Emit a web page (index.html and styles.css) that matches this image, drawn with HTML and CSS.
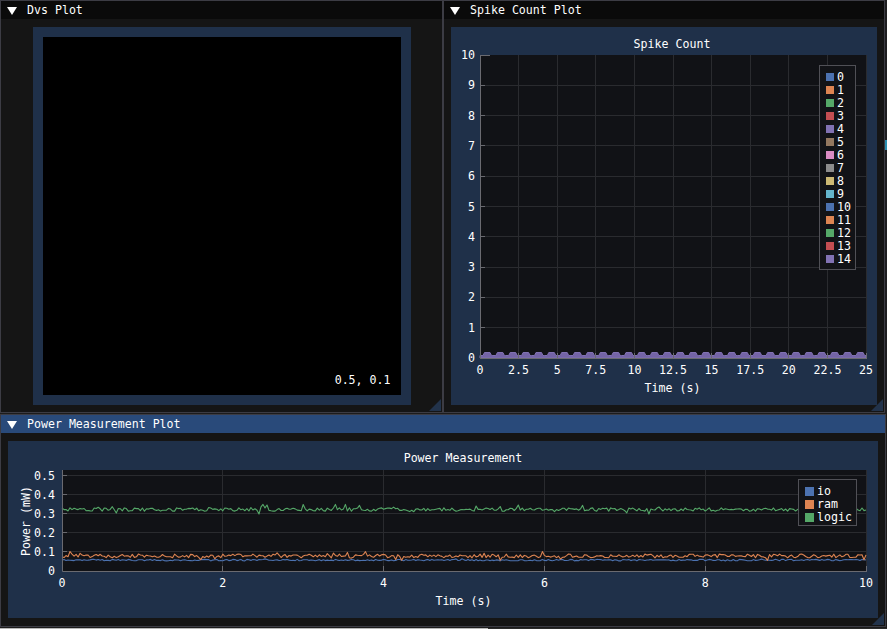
FILE: index.html
```html
<!DOCTYPE html>
<html>
<head>
<meta charset="utf-8">
<title>Plots</title>
<link rel="stylesheet" href="styles.css">
</head>
<body>
<div class="desktop">
  <div class="top-row">
    <section class="win win-dvs">
      <header class="titlebar"><span class="arrow"></span><span class="title">Dvs Plot</span></header>
      <div class="win-body">
        <div class="dvs-frame">
          <div class="dvs-image"><span class="coord">0.5, 0.1</span></div>
        </div>
      </div>
      <div class="grip"></div>
    </section>

    <section class="win win-spike">
      <header class="titlebar"><span class="arrow"></span><span class="title">Spike Count Plot</span></header>
      <div class="win-body">
        <div class="plot-frame">
          <svg class="plot" width="426" height="378" viewBox="0 0 426 378">
            <text x="221" y="21" text-anchor="middle">Spike Count</text>
            <rect class="pbg" x="29" y="28" width="386" height="303"/>
            <path class="grid" d="M67.5 28V331M106.5 28V331M144.5 28V331M183.5 28V331M222.5 28V331M260.5 28V331M299.5 28V331M337.5 28V331M376.5 28V331M415.5 28V331M29 300.5H415M29 270.5H415M29 240.5H415M29 209.5H415M29 179.5H415M29 149.5H415M29 118.5H415M29 88.5H415M29 58.5H415"/>
            <path id="spikeFill" class="spikefill" d=""/>
            <path class="axis" d="M29.5 28V331.5H416"/>
            <path class="ticks" d="M29 28.5h10M29 58.5h5M29 88.5h5M29 118.5h5M29 149.5h5M29 179.5h5M29 209.5h5M29 240.5h5M29 270.5h5M29 300.5h5M67.5 331v-5M106.5 331v-5M144.5 331v-5M183.5 331v-5M222.5 331v-5M260.5 331v-5M299.5 331v-5M337.5 331v-5M376.5 331v-5M415.5 331v-5"/>
            <g text-anchor="end">
              <text x="24" y="32">10</text>
              <text x="24" y="62">9</text>
              <text x="24" y="93">8</text>
              <text x="24" y="123">7</text>
              <text x="24" y="153">6</text>
              <text x="24" y="184">5</text>
              <text x="24" y="214">4</text>
              <text x="24" y="244">3</text>
              <text x="24" y="274">2</text>
              <text x="24" y="305">1</text>
              <text x="24" y="335">0</text>
            </g>
            <g text-anchor="middle">
              <text x="29" y="347">0</text>
              <text x="67.6" y="347">2.5</text>
              <text x="106.2" y="347">5</text>
              <text x="144.8" y="347">7.5</text>
              <text x="183.4" y="347">10</text>
              <text x="222" y="347">12.5</text>
              <text x="260.6" y="347">15</text>
              <text x="299.2" y="347">17.5</text>
              <text x="337.8" y="347">20</text>
              <text x="376.4" y="347">22.5</text>
              <text x="415" y="347">25</text>
              <text x="221.5" y="365">Time (s)</text>
            </g>
            <rect class="legend" x="368.5" y="38.5" width="36" height="204"/>
            <g>
              <rect x="375" y="46" width="8" height="8" fill="#4C72B0"/><text x="386" y="54">0</text>
              <rect x="375" y="59" width="8" height="8" fill="#DD8452"/><text x="386" y="67">1</text>
              <rect x="375" y="72" width="8" height="8" fill="#55A868"/><text x="386" y="80">2</text>
              <rect x="375" y="85" width="8" height="8" fill="#C44E52"/><text x="386" y="93">3</text>
              <rect x="375" y="98" width="8" height="8" fill="#8172B3"/><text x="386" y="106">4</text>
              <rect x="375" y="111" width="8" height="8" fill="#937860"/><text x="386" y="119">5</text>
              <rect x="375" y="124" width="8" height="8" fill="#DA8BC3"/><text x="386" y="132">6</text>
              <rect x="375" y="137" width="8" height="8" fill="#8C8C8C"/><text x="386" y="145">7</text>
              <rect x="375" y="150" width="8" height="8" fill="#CCB974"/><text x="386" y="158">8</text>
              <rect x="375" y="163" width="8" height="8" fill="#64B5CD"/><text x="386" y="171">9</text>
              <rect x="375" y="176" width="8" height="8" fill="#4C72B0"/><text x="386" y="184">10</text>
              <rect x="375" y="189" width="8" height="8" fill="#DD8452"/><text x="386" y="197">11</text>
              <rect x="375" y="202" width="8" height="8" fill="#55A868"/><text x="386" y="210">12</text>
              <rect x="375" y="215" width="8" height="8" fill="#C44E52"/><text x="386" y="223">13</text>
              <rect x="375" y="228" width="8" height="8" fill="#8172B3"/><text x="386" y="236">14</text>
            </g>
          </svg>
        </div>
      </div>
      <div class="grip"></div>
    </section>
    <div class="right-filler"><span class="teal-mark"></span></div>
  </div>

  <section class="win win-power">
    <header class="titlebar active"><span class="arrow"></span><span class="title">Power Measurement Plot</span></header>
    <div class="win-body">
      <div class="plot-frame">
        <svg class="plot" width="870" height="177" viewBox="0 0 870 177">
          <text x="455" y="21" text-anchor="middle">Power Measurement</text>
          <rect class="pbg" x="54" y="29" width="804" height="101"/>
          <path class="grid" d="M214.5 29V130M375.5 29V130M536.5 29V130M697.5 29V130M858.5 29V130M54 110.5H858M54 91.5H858M54 72.5H858M54 53.5H858M54 34.5H858"/>
          <polyline id="io" class="line" stroke="#4C72B0" points=""/>
          <polyline id="ram" class="line" stroke="#DD8452" points=""/>
          <polyline id="logic" class="line" stroke="#55A868" points=""/>
          <path class="axis" d="M54.5 29V130.5H859"/>
          <path class="ticks" d="M54 34.5h5M54 53.5h5M54 72.5h5M54 91.5h5M54 110.5h5M214.5 130v-5M375.5 130v-5M536.5 130v-5M697.5 130v-5M858.5 130v-5"/>
          <g text-anchor="end">
            <text x="47" y="39">0.5</text>
            <text x="47" y="58">0.4</text>
            <text x="47" y="77">0.3</text>
            <text x="47" y="96">0.2</text>
            <text x="47" y="115">0.1</text>
            <text x="47" y="134">0</text>
          </g>
          <g text-anchor="middle">
            <text x="54" y="146">0</text>
            <text x="214.8" y="146">2</text>
            <text x="375.6" y="146">4</text>
            <text x="536.4" y="146">6</text>
            <text x="697.2" y="146">8</text>
            <text x="858" y="146">10</text>
            <text x="455.5" y="164">Time (s)</text>
            <text transform="translate(22 80) rotate(-90)">Power (mW)</text>
          </g>
          <rect class="legend" x="790.5" y="38.5" width="58" height="46"/>
          <rect x="797" y="46" width="9" height="9" fill="#4C72B0"/><text x="809" y="54">io</text>
          <rect x="797" y="59" width="9" height="9" fill="#DD8452"/><text x="809" y="67">ram</text>
          <rect x="797" y="72" width="9" height="9" fill="#55A868"/><text x="809" y="80">logic</text>
        </svg>
      </div>
    </div>
    <div class="grip"></div>
  </section>
  <div class="bottom-strip"><span class="strip-light"></span><span class="strip-dark"></span></div>
</div>
<script src="script.js"></script>
</body>
</html>
```

FILE: styles.css
```css
* {
  box-sizing: border-box;
  margin: 0;
  padding: 0;
}

html, body {
  width: 887px;
  height: 629px;
  overflow: hidden;
}

body {
  background: #1c1c1c;
  font-family: "DejaVu Sans Mono", "Liberation Mono", monospace;
  font-size: 11.6px;
  color: #ffffff;
}

.desktop {
  display: flex;
  flex-direction: column;
  width: 887px;
  height: 629px;
}

.top-row {
  display: flex;
  height: 413px;
}

.win {
  position: relative;
  display: flex;
  flex-direction: column;
  background: #151515;
  border: 1px solid #3c3c44;
}

.win-dvs {
  width: 443px;
  height: 413px;
}

.win-spike {
  width: 442px;
  height: 413px;
}

.right-filler {
  position: relative;
  flex: 1;
  background: #1e1e20;
}

.teal-mark {
  position: absolute;
  top: 140px;
  left: 0;
  width: 2px;
  height: 10px;
  background: #2a8fb0;
}

.win-power {
  width: 886px;
  height: 213px;
  margin-top: 1px;
}

.titlebar {
  display: flex;
  align-items: center;
  height: 18px;
  padding-left: 6px;
  background: #0a0a0a;
  white-space: pre;
}

.titlebar.active {
  background: #294a7a;
}

.arrow {
  width: 0;
  height: 0;
  border-left: 5px solid transparent;
  border-right: 5px solid transparent;
  border-top: 8px solid #ffffff;
  margin-right: 10px;
  margin-top: 1px;
}

.title {
  line-height: 18px;
}

.win-body {
  flex: 1;
  display: flex;
  padding: 8px 7px 7px 7px;
}

.win-power .win-body {
  padding-bottom: 8px;
}

.dvs-frame {
  width: 378px;
  height: 378px;
  margin: 0 auto;
  padding: 10px;
  background: #1f3049;
}

.dvs-image {
  position: relative;
  width: 100%;
  height: 100%;
  background: #000000;
}

.coord {
  position: absolute;
  right: 10px;
  bottom: 9px;
  line-height: 12px;
}

.plot-frame {
  flex: 1;
  background: #1f3049;
  overflow: hidden;
}

.plot {
  display: block;
}

.plot text {
  font-family: "DejaVu Sans Mono", "Liberation Mono", monospace;
  font-size: 11.6px;
  fill: #ffffff;
}

.pbg {
  fill: #111216;
}

.grid {
  stroke: #2a2b2f;
  stroke-width: 1;
  fill: none;
}

.axis {
  stroke: #6a6a70;
  stroke-width: 1;
  fill: none;
}

.ticks {
  stroke: #6a6a70;
  stroke-width: 1;
  fill: none;
}

.legend {
  fill: #121317;
  stroke: #505056;
  stroke-width: 1;
}

.line {
  fill: none;
  stroke-width: 1.1;
  stroke-linejoin: round;
}

.spikefill {
  fill: #7464a6;
  stroke: #8172B3;
  stroke-width: 1;
}

.grip {
  position: absolute;
  right: 1px;
  bottom: 1px;
  width: 0;
  height: 0;
  border-style: solid;
  border-width: 0 0 12px 12px;
  border-color: transparent transparent #22334b transparent;
}

.bottom-strip {
  display: flex;
  flex: 1;
  margin-top: 1px;
}

.strip-light {
  width: 488px;
  background: #b8b8b8;
}

.strip-dark {
  flex: 1;
  background: #2a2a2a;
}
```

FILE: script.js
```js
(function () {
  function mulberry32(a) {
    return function () {
      a |= 0; a = a + 0x6D2B79F5 | 0;
      var t = Math.imul(a ^ a >>> 15, 1 | a);
      t = t + Math.imul(t ^ t >>> 7, 61 | t) ^ t;
      return ((t ^ t >>> 14) >>> 0) / 4294967296;
    };
  }
  var r = mulberry32(12345);
  var N = 400;
  var x0 = 54, x1 = 858;
  function y(v) { return (130 - v * 191).toFixed(1); }
  function series(base, amp, spikeP, spikeAmp) {
    var pts = [];
    for (var i = 0; i <= N; i++) {
      var v = base + (r() - 0.5) * amp;
      if (r() < spikeP) v += (r() - 0.45) * spikeAmp;
      var x = x0 + (x1 - x0) * i / N;
      pts.push(x.toFixed(1) + "," + y(v));
    }
    return pts.join(" ");
  }
  document.getElementById("logic").setAttribute("points", series(0.322, 0.018, 0.1, 0.045));
  document.getElementById("ram").setAttribute("points", series(0.079, 0.02, 0.12, 0.035));
  document.getElementById("io").setAttribute("points", series(0.057, 0.008, 0.05, 0.014));

  // spike count bars along the bottom
  var d = "M29 331";
  var period = 386 / 30;
  for (var k = 0; k < 30; k++) {
    var bx = 29 + k * period;
    d += " L" + bx.toFixed(1) + " 328.5";
    d += " L" + (bx + 3).toFixed(1) + " 328.5";
    d += " L" + (bx + 4.5).toFixed(1) + " 325.5";
    d += " L" + (bx + 10).toFixed(1) + " 325.5";
    d += " L" + (bx + 11.5).toFixed(1) + " 328.5";
  }
  d += " L415 328.5 L415 331 Z";
  document.getElementById("spikeFill").setAttribute("d", d);
})();
```
